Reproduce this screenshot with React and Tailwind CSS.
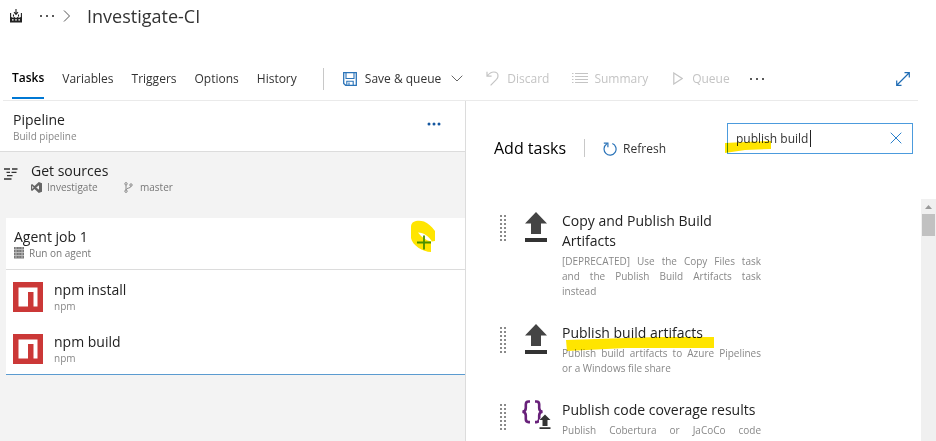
import React from "react";

function BuildIcon() {
  return (
    <svg width="14" height="14" viewBox="0 0 14 14" aria-hidden="true">
      <path d="M7 0v5M5 3.200 7 5.400l2-2.200" fill="none" stroke="#222" strokeWidth="1.100" />
      <path d="M1.600 4v4M12.400 4v4M4.500 5.500v2M9.500 5.500v2" fill="none" stroke="#222" strokeWidth="1.100" />
      <path d="M1 7.500 4.500 9V7.500L7 9l2.500-1.500V9L13 7.500v6H1z" fill="#222" />
      <path d="M3 10.200h1.600v1.300H3zM6.200 10.200h1.600v1.300H6.200zM9.400 10.200H11v1.300H9.400z" fill="#fff" />
    </svg>
  );
}

function DotsIcon({ width = 16, gap = 6, r = 1, className = "" }) {
  return (
    <svg width={width} height="4" viewBox={`0 0 ${width} 4`} className={className} fill="currentColor" aria-hidden="true">
      {[-1, 0, 1].map((i) => (
        <circle key={i} cx={width / 2 + i * gap} cy="2" r={r} />
      ))}
    </svg>
  );
}

function SaveIcon() {
  return (
    <svg width="14" height="14" viewBox="0 0 14 14" fill="none" stroke="#2a73b8" aria-hidden="true">
      <path d="M.7.7h12.600v12.600H2.600L.7 11.400z" strokeWidth="1.300" />
      <path d="M3 1v5.500h8V1M3.800 13V9.300h6.400V13M6 10.500V13" strokeWidth="1.100" />
    </svg>
  );
}

function UndoIcon() {
  return (
    <svg width="13" height="15" viewBox="0 0 13 15" fill="none" stroke="currentColor" strokeWidth="1.200" aria-hidden="true">
      <path d="M1 .8v4.400h4.600M1.200 5C3.200 2.400 5.400 1 7.800 1c2.500 0 4.200 1.700 4.200 3.900 0 1.400-.6 2.400-1.500 3.400L4.600 14.300" />
    </svg>
  );
}

function ListIcon() {
  return (
    <svg width="16" height="11" viewBox="0 0 16 11" stroke="currentColor" aria-hidden="true">
      {[0.5, 3.5, 6.5, 9.5].map((y) => (
        <path key={y} d={`M0 ${y}h1.500M3 ${y}h13`} />
      ))}
    </svg>
  );
}

function PlayIcon() {
  return (
    <svg width="10" height="13" viewBox="0 0 10 13" fill="none" stroke="currentColor" strokeWidth="1.200" aria-hidden="true">
      <path d="M.8 1v11l8.400-5.500z" />
    </svg>
  );
}

function ExpandIcon() {
  return (
    <svg width="14" height="14" viewBox="0 0 14 14" fill="none" stroke="#1f6cb4" strokeWidth="1.200" aria-hidden="true">
      <path d="M1 13 13 1M8.500.7h4.800v4.800M.7 8.500v4.800h4.800" />
    </svg>
  );
}

function SourcesIcon() {
  return (
    <svg width="14" height="12" viewBox="0 0 14 12" stroke="#333" strokeWidth="1.300" aria-hidden="true">
      <path d="M0 1h6M8 1h5.500M2.500 4.300h3.500M7.500 4.300h5M3 7.600h5.500M0 11h7.500" />
    </svg>
  );
}

function VisualStudioIcon() {
  return (
    <svg width="11" height="11" viewBox="0 0 11 11" fill="#666" aria-hidden="true">
      <path fillRule="evenodd" d="M7.800 0 11 1.300v8.400L7.800 11 3.500 6.900 1.100 8.900 0 8.300V2.700l1.100-.6 2.400 2zM8 3.200 5.200 5.500 8 7.800zM1.200 4v3l1.500-1.500z" />
    </svg>
  );
}

function BranchIcon() {
  return (
    <svg width="9" height="11" viewBox="0 0 9 11" fill="none" stroke="#888" aria-hidden="true">
      <circle cx="2" cy="1.800" r="1.200" />
      <circle cx="7" cy="3" r="1.200" />
      <circle cx="2" cy="9.200" r="1.200" />
      <path d="M2 3v5M7 4.200C7 6.500 2.600 5.500 2.100 7.800" />
    </svg>
  );
}

function AgentIcon() {
  return (
    <svg width="10" height="12" viewBox="0 0 10 12" aria-hidden="true">
      {[0, 3, 6, 9].map((y) => (
        <g key={y}>
          <path d={`M0 ${y}h10v2.500H0z`} fill="#777" />
          <path d={`M1 ${y + 1}h2M4.500 ${y + 1}h1M7 ${y + 1}h2`} stroke="#ccc" strokeWidth=".8" />
        </g>
      ))}
    </svg>
  );
}

function NpmIcon() {
  return (
    <svg width="30" height="30" viewBox="0 0 30 30" className="shrink-0" aria-hidden="true">
      <path d="M0 0h30v30H0z" fill="#cb3837" />
      <path d="M5.500 5.500h19v19h-4V10h-5.500v14.500H5.500z" fill="#fff" />
    </svg>
  );
}

function RefreshIcon() {
  return (
    <svg width="14" height="14" viewBox="0 0 14 14" fill="none" stroke="#2a73b8" strokeWidth="1.200" aria-hidden="true">
      <path d="M9.300 1.500a6 6 0 1 1-5.600.6M.8 1.200h4.100v4" />
    </svg>
  );
}

function GripIcon() {
  return (
    <svg width="7" height="27" viewBox="0 0 7 27" fill="#8a8a8a" aria-hidden="true">
      {[0, 1, 2, 3, 4, 5, 6].map((i) => (
        <path key={i} d={`M0 ${i * 4}h2v2h-2zM4 ${i * 4}h2v2h-2z`} />
      ))}
    </svg>
  );
}

function PublishIcon() {
  return (
    <svg width="30" height="32" viewBox="0 0 30 32" className="block" aria-hidden="true">
      <path d="M15 1 26 12.500h-6V23H10V12.500H4z" fill="#444" />
      <path d="M4 27h22v4H4z" fill="#333" />
    </svg>
  );
}

function CoverageIcon() {
  return (
    <svg width="30" height="32" viewBox="0 0 30 32" className="block" aria-hidden="true">
      <path
        d="M9 1.500H7.500C5.500 1.500 4.800 2.500 4.800 4.500v3.500c0 2-.8 3.500-3.300 3.800 2.500.3 3.300 1.800 3.300 3.800v3.500c0 2 .7 3 2.700 3H9M14 1.500h1.500c2 0 2.700 1 2.700 3v3.500c0 2 .8 3.500 3.300 3.800-2.500.3-3.300 1.800-3.300 3.800v3.500c0 2-.7 3-2.700 3H14"
        fill="none"
        stroke="#68217a"
        strokeWidth="2.600"
      />
      <path d="M24 13.500 30 20v9H18v-9z" fill="#fff" />
      <path d="m24 14.500 5.500 5.500h-3v6h-5v-6h-3zM18.500 27.200h11V29h-11z" fill="#333" />
    </svg>
  );
}

const tabs = ["Variables", "Triggers", "Options", "History"];

const steps = [
  { title: "npm install", kind: "npm" },
  { title: "npm build", kind: "npm" },
];

const tasks = [
  {
    title: "Copy and Publish Build Artifacts",
    lines: ["[DEPRECATED] Use the Copy Files task", "and the Publish Build Artifacts task", "instead"],
    Icon: PublishIcon,
  },
  {
    title: "Publish build artifacts",
    lines: ["Publish build artifacts to Azure Pipelines", "or a Windows file share"],
    Icon: PublishIcon,
    marked: true,
  },
  {
    title: "Publish code coverage results",
    lines: ["Publish Cobertura or JaCoCo code", "coverage results from a build"],
    Icon: CoverageIcon,
  },
];

function Header() {
  return (
    <header className="flex h-8 shrink-0 items-center pl-[9px]">
      <BuildIcon />
      <button aria-label="More breadcrumbs" className="ml-4 text-[#222]">
        <DotsIcon width={16} />
      </button>
      <svg width="8" height="12" viewBox="0 0 8 12" fill="none" stroke="#555" className="ml-2" aria-hidden="true">
        <path d="m1 .5 5.500 5.500L1 11.500" />
      </svg>
      <h1 className="ml-4 text-[18px] leading-6 text-[#333]">Investigate-CI</h1>
    </header>
  );
}

function Toolbar() {
  return (
    <div className="ml-[3px] mr-[18px] mt-6 flex h-[45px] shrink-0 items-stretch border-b border-[#eaeaea] pl-[9px] pt-px text-[12px] text-[#333]">
      <nav className="flex gap-[18px]">
        <a href="#tasks" className="mb-px flex items-center border-b-2 border-[#0078d4] pt-[2px] font-semibold text-black">
          Tasks
        </a>
        {tabs.map((t) => (
          <a key={t} href={"#" + t.toLowerCase()} className="flex items-center">
            {t}
          </a>
        ))}
      </nav>
      <div className="ml-[26px] mr-[19px] h-[22px] w-px self-center bg-[#c8c8c8]" />
      <button className="flex items-center">
        <SaveIcon />
        <span className="ml-2 mr-[10px]">Save &amp; queue</span>
        <svg width="12" height="7" viewBox="0 0 12 7" fill="none" stroke="#666" aria-hidden="true">
          <path d="m.7.700 5.300 5.300L11.300.7" />
        </svg>
      </button>
      <button disabled className="ml-[23px] flex items-center gap-2 text-[#c4c4c4]">
        <UndoIcon />
        Discard
      </button>
      <button disabled className="ml-[23px] flex items-center gap-[6px] text-[#c4c4c4]">
        <ListIcon />
        Summary
      </button>
      <button disabled className="ml-[25px] flex items-center gap-[9px] text-[#c4c4c4]">
        <PlayIcon />
        Queue
      </button>
      <button aria-label="More actions" className="ml-[18px] text-[#222]">
        <DotsIcon width={18} />
      </button>
      <button aria-label="Full screen" className="ml-auto mr-2">
        <ExpandIcon />
      </button>
    </div>
  );
}

function PipelinePanel() {
  return (
    <section className="w-[466px] shrink-0 border-r border-[#dcdcdc] bg-[#f3f3f3]">
      <div className="flex h-[51px] items-center justify-between border-b border-[#dcdcdc] bg-white pl-[13px] pr-6">
        <div className="pt-px">
          <h2 className="text-[14px] leading-[18px] text-[#222]">Pipeline</h2>
          <p className="text-[10px] leading-[14px] text-[#888]">Build pipeline</p>
        </div>
        <button aria-label="Pipeline actions" className="pb-1 text-[#1557a0]">
          <DotsIcon width={14} gap={5} r={1.500} />
        </button>
      </div>
      <div className="flex h-[66px] gap-[13px] pl-1 pt-[10px]">
        <div className="pt-[6px]">
          <SourcesIcon />
        </div>
        <div>
          <h2 className="text-[14px] leading-[18px] text-[#222]">Get sources</h2>
          <div className="flex text-[10px] leading-[14px] text-[#777]">
            <span className="flex w-[93px] items-center gap-[5px]">
              <VisualStudioIcon />
              Investigate
            </span>
            <span className="flex items-center gap-[7px]">
              <BranchIcon />
              master
            </span>
          </div>
        </div>
      </div>
      <div className="ml-[6px] border-b border-[#5b9bd0] bg-white">
        <div className="flex h-[52px] items-center justify-between border-b border-[#dcdcdc] pl-2 pr-[34px]">
          <div className="pt-px">
            <h2 className="text-[14px] leading-[18px] text-[#222]">Agent job 1</h2>
            <p className="flex items-center gap-[5px] text-[10px] leading-[14px] text-[#777]">
              <AgentIcon />
              Run on agent
            </p>
          </div>
          <button aria-label="Add a task" className="relative h-4 w-4">
            <svg width="26" height="34" viewBox="0 0 26 34" className="absolute -left-[5px] -top-[16px] max-w-none" aria-hidden="true">
              <path d="M6 1C2 2 1 4 1 8v10c1 7 12 14 20 14v-9c-2-1-1-1 4-2V11C21 6 18 3 14 1.500c-3-.8-5-.8-8-.5zM8 12.500c6 0 11 4 14 9-6-1-10-4-14-9z" fill="#ffe500" fillRule="evenodd" />
              <path d="M7 22.500h14M14 15.500v14" fill="none" stroke="#4a9000" strokeWidth="1.800" />
            </svg>
          </button>
        </div>
        {steps.map((s) => (
          <div key={s.title} className="flex h-[52px] items-center gap-[11px] pl-[7px] pt-px">
            <NpmIcon />
            <div className="pt-px">
              <h3 className="text-[14px] leading-[18px] text-[#222]">{s.title}</h3>
              <p className="text-[10px] leading-[14px] text-[#888]">{s.kind}</p>
            </div>
          </div>
        ))}
      </div>
    </section>
  );
}

function TaskCard({ title, lines, Icon, marked }) {
  return (
    <li className="flex">
      <div className="pt-1">
        <GripIcon />
      </div>
      <div className="ml-[14px] w-[30px]">
        <Icon />
      </div>
      <div className="relative ml-[11px] w-[199px]">
        <h3 className="text-[14px] leading-5 text-[#222]">{title}</h3>
        <p className="mt-[3px] text-[10px] leading-[15px] text-[#888]">
          {lines.map((line, i) => (
            <span key={line} className={i < lines.length - 1 ? "block text-justify [text-align-last:justify]" : "block"}>
              {line}{" "}
            </span>
          ))}
        </p>
        {marked && (
          <svg width="148" height="14" viewBox="0 0 148 14" className="absolute left-1 top-[14px] mix-blend-multiply" aria-hidden="true">
            <path d="M0 3 30 2l60-2h58v11H60L1 14z" fill="#ffe500" />
          </svg>
        )}
      </div>
    </li>
  );
}

function TasksPanel() {
  return (
    <section className="flex min-w-0 flex-1 flex-col bg-white">
      <div className="flex h-[98px] shrink-0 items-center pb-1 pl-7 pr-[23px]">
        <h2 className="text-[16px] text-black">Add tasks</h2>
        <div className="ml-[18px] mr-[18px] h-[18px] w-px bg-[#c8c8c8]" />
        <button className="flex items-center gap-[6px] pt-px text-[12px] text-[#333]">
          <RefreshIcon />
          Refresh
        </button>
        <div className="relative mb-5 ml-auto flex h-[31px] w-[186px] items-center border border-[#4c9bdd]">
          <input aria-label="Search tasks" defaultValue="publish build" className="min-w-0 flex-1 bg-transparent pl-2 pt-[2px] text-[12px] text-[#333] outline-none" />
          <span className="absolute left-[82px] top-[6px] h-[17px] w-px bg-[#222]" />
          <svg width="46" height="12" viewBox="0 0 46 12" className="absolute -left-[3px] top-[17px] mix-blend-multiply" aria-hidden="true">
            <path d="m0 2 20-1 26-1v8L20 9 0 12z" fill="#ffe500" />
          </svg>
          <button aria-label="Clear search" className="mr-[10px]">
            <svg width="12" height="12" viewBox="0 0 12 12" fill="none" stroke="#2a80cc" aria-hidden="true">
              <path d="m.7.700 10.600 10.600M11.300.7.7 11.300" />
            </svg>
          </button>
        </div>
      </div>
      <div className="flex min-h-0 flex-1">
        <ul className="flex min-w-0 flex-1 flex-col gap-6 overflow-hidden pl-[34px] pt-3">
          {tasks.map((t) => (
            <TaskCard key={t.title} {...t} />
          ))}
        </ul>
        <div className="flex w-[15px] shrink-0 flex-col items-center bg-[#f0f0f0]" aria-hidden="true">
          <svg width="7" height="15" viewBox="0 0 7 15" fill="#999">
            <path d="M0 10 3.500 6 7 10z" />
          </svg>
          <div className="h-[22px] w-[13px] bg-[#c1c1c1]" />
        </div>
      </div>
    </section>
  );
}

export default function App() {
  return (
    <div className="flex h-screen flex-col overflow-hidden bg-white font-['Open_Sans','Noto_Sans',sans-serif]">
      <Header />
      <Toolbar />
      <main className="flex min-h-0 flex-1">
        <PipelinePanel />
        <TasksPanel />
      </main>
    </div>
  );
}
